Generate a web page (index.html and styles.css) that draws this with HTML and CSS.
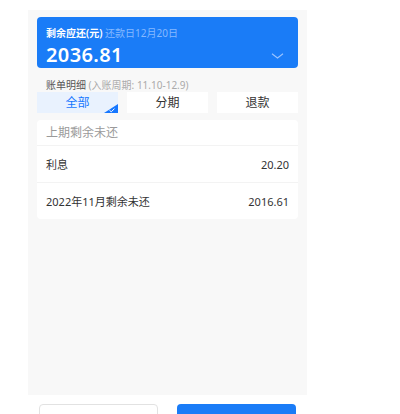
FILE: index.html
```html
<!DOCTYPE html>
<html lang="zh-CN">
<head>
    <meta charset="UTF-8">
    <meta name="viewport" content="width=device-width, initial-scale=1.0">
    <title>账单明细</title>
    <link rel="stylesheet" href="styles.css">
</head>
<body>
    <div class="page">
        <div class="panel">
            <!-- Balance card -->
            <div class="balance">
                <div class="balance-label">剩余应还(元) <span class="due">还款日12月20日</span></div>
                <div class="balance-row">
                    <span class="amount">2036.81</span>
                    <svg class="chevron" width="13" height="6" viewBox="0 0 13 6">
                        <path d="M1 0.8 L6.5 5 L12 0.8" fill="none" stroke="#9cc4ff" stroke-width="1.1"/>
                    </svg>
                </div>
            </div>

            <div class="bill-title">账单明细 <span class="period">(入账周期: 11.10-12.9)</span></div>

            <div class="tabs">
                <div class="tab active">
                    全部
                    <svg class="corner" width="14" height="9" viewBox="0 0 14 9">
                        <path d="M0 9 L14 0 L14 9 Z" fill="#1677ff"/>
                        <path d="M5.5 6.3 L7.3 7.8 L10.5 4.6" fill="none" stroke="#fff" stroke-width="1"/>
                    </svg>
                </div>
                <div class="tab">分期</div>
                <div class="tab">退款</div>
            </div>

            <div class="list">
                <div class="list-head">上期剩余未还</div>
                <div class="row">
                    <span>利息</span>
                    <span>20.20</span>
                </div>
                <div class="row">
                    <span>2022年11月剩余未还</span>
                    <span>2016.61</span>
                </div>
            </div>
        </div>

        <div class="actions">
            <button class="btn btn-ghost"></button>
            <button class="btn btn-primary"></button>
        </div>
    </div>
</body>
</html>
```

FILE: styles.css
```css
body {
    margin: 0;
    background: #fff;
    font-family: "Noto Sans", "Noto Sans CJK SC", sans-serif;
    color: #333;
}
.page {
    padding: 10px 0 0 28px;
    width: 279px;
}
.panel {
    background: #f8f8f8;
    height: 385px;
    padding: 7px 9px 0;
    box-sizing: border-box;
}
.balance {
    background: #1a7cf7;
    border-radius: 4px;
    height: 51px;
    padding: 9px 9px 0;
    box-sizing: border-box;
    color: #fff;
}
.balance-label {
    font-size: 10px;
    font-weight: 600;
    line-height: 14px;
}
.due {
    color: #86b9ff;
    font-weight: 400;
}
.balance-row {
    display: flex;
    justify-content: space-between;
    align-items: center;
    margin-top: 2px;
}
.amount {
    font-size: 20px;
    font-weight: 600;
    line-height: 26px;
    letter-spacing: 0.4px;
}
.chevron {
    margin-right: 5px;
    margin-top: 1px;
}
.bill-title {
    font-size: 10px;
    color: #555;
    line-height: 14px;
    padding: 10px 0 0 9px;
}
.period {
    color: #aaa;
}
.tabs {
    display: flex;
    gap: 9px;
}
.tab {
    position: relative;
    flex: 1;
    height: 21px;
    background: #fff;
    font-size: 12px;
    line-height: 21px;
    text-align: center;
    color: #333;
}
.tab.active {
    background: #e9f2fe;
    color: #1677ff;
}
.corner {
    position: absolute;
    right: 0;
    bottom: 0;
}
.list {
    background: #fff;
    border-radius: 4px;
    margin-top: 7px;
}
.list-head {
    height: 25px;
    line-height: 25px;
    font-size: 12px;
    color: #9a9a9a;
    padding-left: 9px;
    border-bottom: 1px solid #f3f3f3;
}
.row {
    display: flex;
    justify-content: space-between;
    height: 36px;
    align-items: center;
    padding: 0 9px;
    font-size: 11px;
    color: #333;
}
.row + .row {
    border-top: 1px solid #f3f3f3;
}
.actions {
    display: flex;
    gap: 19px;
    padding: 9px 0 0 11px;
}
.btn {
    width: 119px;
    height: 30px;
    border-radius: 4px;
    border: none;
    padding: 0;
}
.btn-ghost {
    background: #fff;
    border: 1px solid #e2e2e2;
}
.btn-primary {
    background: #1a7cf7;
}
```
